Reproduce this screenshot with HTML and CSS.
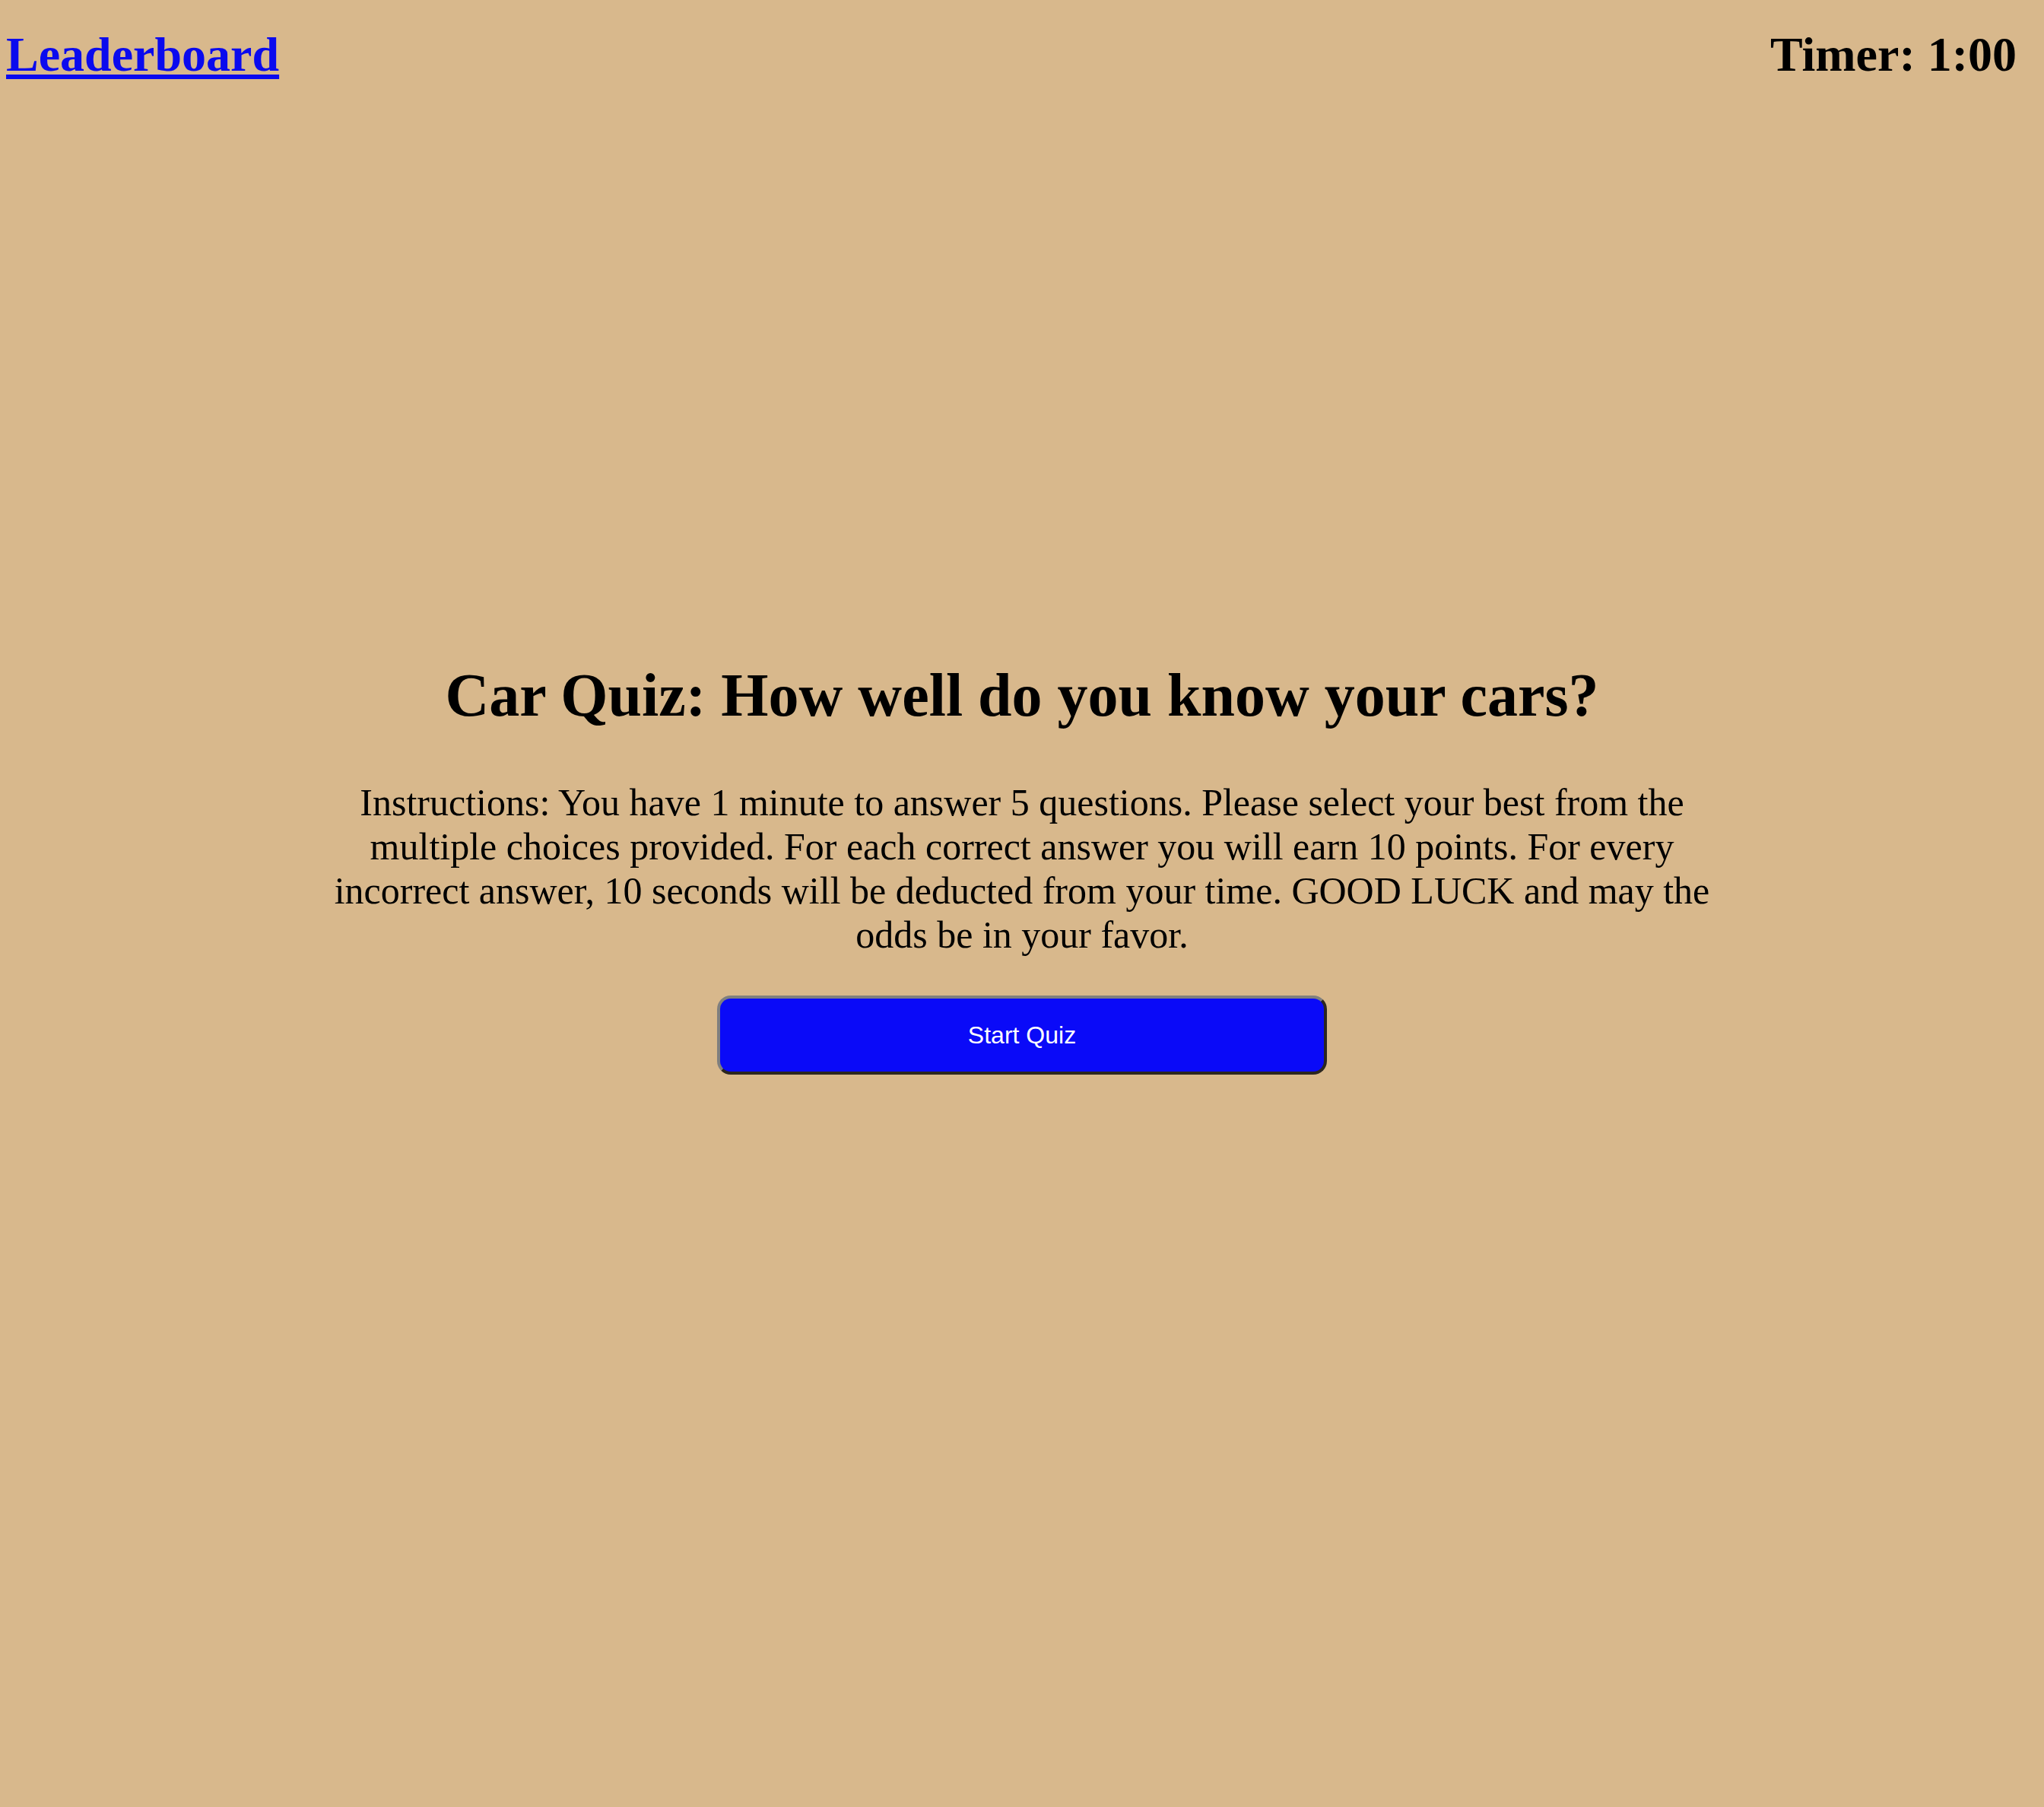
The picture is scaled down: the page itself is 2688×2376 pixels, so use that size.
FILE: index.html
```html
<!DOCTYPE html>
<html lang="en">
<head>
<meta charset="utf-8">
<title>Car Quiz</title>
<link rel="stylesheet" href="styles.css">
</head>
<body>
<header class="top-bar">
  <a class="leaderboard-link" href="#">Leaderboard</a>
  <div class="timer">Timer: 1:00</div>
</header>
<main class="quiz-intro">
  <h1 class="quiz-title">Car Quiz: How well do you know your cars?</h1>
  <p class="quiz-instructions">Instructions: You have 1 minute to answer 5 questions. Please select your best from the multiple choices provided. For each correct answer you will earn 10 points. For every incorrect answer, 10 seconds will be deducted from your time. GOOD LUCK and may the odds be in your favor.</p>
  <button class="start-button" type="button">Start Quiz</button>
</main>
</body>
</html>
```

FILE: styles.css
```css
html, body {
  margin: 0;
  padding: 0;
}

body {
  background: #d8b88c;
  font-family: "Liberation Serif", "Times New Roman", serif;
  color: #000;
  min-height: 2376px;
}

.top-bar {
  display: flex;
  justify-content: space-between;
  align-items: baseline;
  padding: 35px 36px 0 8px;
  font-size: 64px;
  font-weight: bold;
  line-height: normal;
}

.leaderboard-link {
  color: #0a0aee;
  text-decoration: underline;
  text-decoration-thickness: 6px;
  text-underline-offset: 5px;
}

.timer {
  color: #000;
}

.quiz-intro {
  display: flex;
  flex-direction: column;
  align-items: center;
  padding-top: 760px;
}

.quiz-title {
  margin: 0;
  font-size: 80px;
  font-weight: bold;
  line-height: normal;
  text-align: center;
}

.quiz-instructions {
  margin: 66px 0 0;
  width: 1840px;
  font-size: 50px;
  line-height: 58px;
  text-align: center;
}

.start-button {
  margin-top: 51px;
  width: 802px;
  height: 104px;
  background: #0a0af8;
  color: #fff;
  font-family: "Liberation Sans", Arial, sans-serif;
  font-size: 32px;
  border-style: solid;
  border-width: 4px;
  border-color: #7f7f7f #2b2620 #2b2620 #7f7f7f;
  border-radius: 18px;
  cursor: pointer;
}
```
